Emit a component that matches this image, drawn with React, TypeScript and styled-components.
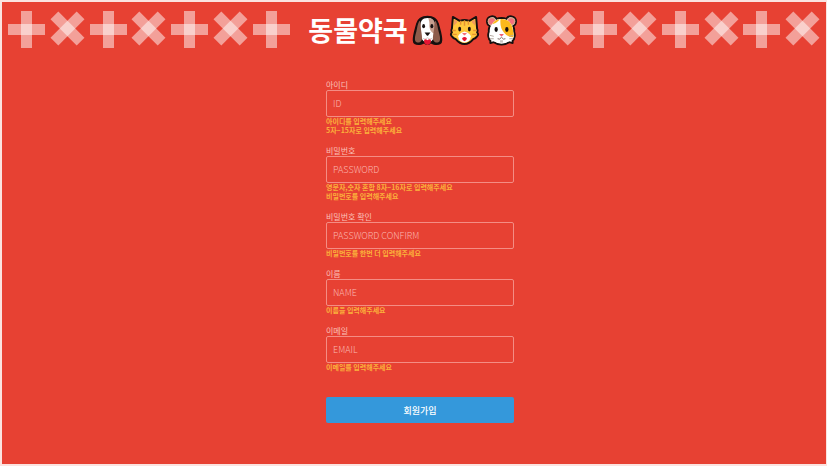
import React from "react";
import styled, { createGlobalStyle } from "styled-components";

const GlobalStyle = createGlobalStyle`
  * { box-sizing: border-box; }
  body {
    margin: 0;
    background: #ffffff;
    font-family: "Noto Sans CJK KR", "Noto Sans", sans-serif;
  }
`;

const Page = styled.div`
  min-height: 100vh;
  border: 2px solid #fbe3e0;
  border-right-width: 1px;
  background: #e74133;
`;

const Header = styled.header`
  display: grid;
  grid-template-columns: 1fr auto 1fr;
  align-items: center;
  padding: 9px 5px 0 6px;
`;

const Strip = styled.div`
  display: flex;
  justify-content: space-between;
`;

const CrossIcon = styled.svg<{ $turned: boolean }>`
  width: 37px;
  height: 37px;
  margin-top: ${(p) => (p.$turned ? "-1px" : "0")};
  overflow: visible;
  transform: rotate(${(p) => (p.$turned ? "45deg" : "0deg")});
  fill: rgba(255, 255, 255, 0.5);
`;

const Title = styled.h1`
  display: flex;
  align-items: center;
  justify-content: center;
  gap: 4px;
  width: 250px;
  margin: 0;
  padding-right: 4px;
  color: #ffffff;
  font-size: 27px;
  font-weight: 700;
  line-height: 37px;
  white-space: nowrap;
`;

const Animals = styled.span`
  display: flex;
  gap: 6px;
  padding-top: 2px;
`;

const AnimalIcon = styled.svg`
  width: 31px;
  height: 31px;
`;

const Content = styled.main`
  padding: 32px 0 40px 12px;
`;

const Form = styled.form`
  display: flex;
  flex-direction: column;
  gap: 11px;
  width: 188px;
  margin: 0 auto;
`;

const Field = styled.div`
  display: flex;
  flex-direction: column;
`;

const Label = styled.label`
  color: #fbc0b8;
  font-size: 8px;
  line-height: 10px;
`;

const Input = styled.input`
  width: 100%;
  height: 27px;
  padding: 0 6px;
  border: 1px solid #f48d84;
  border-radius: 2px;
  outline: none;
  background: transparent;
  color: #ffffff;
  font-family: inherit;
  font-size: 9px;
  font-weight: 300;

  &::placeholder {
    color: #fbb8b1;
    opacity: 1;
  }
`;

const Hint = styled.p`
  margin: 0;
  color: #fbb03b;
  font-size: 7px;
  font-weight: 700;
  line-height: 9px;
`;

const Submit = styled.button`
  height: 26px;
  margin-top: 14px;
  padding: 0;
  border: 0;
  border-radius: 2px;
  background: #3498db;
  color: #ffffff;
  font-family: inherit;
  font-size: 9px;
  font-weight: 500;
  cursor: pointer;
`;

function CrossStrip({ startTurned }: { startTurned: boolean }) {
  return (
    <Strip aria-hidden="true">
      {Array.from({ length: 7 }, (_, i) => (
        <CrossIcon key={i} viewBox="0 0 37 37" $turned={(i % 2 === 1) !== startTurned}>
          <rect x="13" y="0" width="11" height="37" />
          <rect x="0" y="13" width="37" height="11" />
        </CrossIcon>
      ))}
    </Strip>
  );
}

function Dog() {
  return (
    <AnimalIcon viewBox="0 0 32 32" role="img" aria-label="dog">
      <path
        d="M16 1.5C10 1.5 6.500 3.500 5 9C3.500 15 1.500 20 1.500 26C1.500 29.500 4 30.500 8 30.200C10 30 12 28.500 13 28.500C14 30.500 18 30.500 19 28.500C20 28.500 22 30 24 30.200C28 30.500 30.500 29.500 30.500 26C30.500 20 28.500 15 27 9C25.500 3.500 22 1.500 16 1.500Z"
        fill="#17100f" stroke="#17100f" strokeWidth="1.500"
      />
      <path d="M16 3C10.500 3 8.500 6 8.500 12L9.500 23C11 27 13 28 16 28C19 28 21 27 22.500 23L23.500 12C23.500 6 21.500 3 16 3Z" fill="#ffffff" />
      <path d="M17 3C21 3 24 6 24 11L23 19C19 18 17.500 13 18 9C18 6 17 5 17 3Z" fill="#c6a08f" />
      <path d="M8 6C6 8 5.500 13 4.500 17C3.200 21 2.500 25 3.500 27C5 29 8.500 29 10 26C11 23 9.500 18 9 13C8.800 10 9 8 8 6Z" fill="#8d5c4b" />
      <path d="M24 6C26 8 26.500 13 27.500 17C28.800 21 29.500 25 28.500 27C27 29 23.500 29 22 26C21 23 22.500 18 23 13C23.200 10 23 8 24 6Z" fill="#8d5c4b" />
      <ellipse cx="12" cy="11.500" rx="1.500" ry="2.200" fill="#17100f" />
      <ellipse cx="20.500" cy="11.500" rx="1.500" ry="2.200" fill="#17100f" />
      <path d="M13 18H19L16.500 21.500H15.500Z" fill="#17100f" />
      <path d="M11 24Q13.500 26 16 23.500Q18.500 26 21 24" fill="none" stroke="#d6c8c3" />
      <path d="M12.500 25.500Q14.500 24.500 16 26Q17.500 24.500 19.500 25.500V28Q18 31 16 31Q14 31 12.500 28Z" fill="#e81432" />
    </AnimalIcon>
  );
}

function Cat() {
  return (
    <AnimalIcon viewBox="0 0 32 32" role="img" aria-label="cat">
      <path
        d="M4 2L11 6Q16 4.500 21 6L28 2L29 14Q30 16 29 18Q31 20 29 22Q27.500 24 25 25Q21 30 16 30Q11 30 7 25Q4.500 24 3 22Q1 20 3 18Q2 16 3 14Z"
        fill="#ffc83d" stroke="#17100f" strokeWidth="2" strokeLinejoin="round"
      />
      <path d="M5.500 4.500L9 7L5 11ZM26.500 4.500L23 7L27 11Z" fill="#f39a5c" />
      <path d="M12 6V10M16 5.500V11M20 6V10M3.500 16H7M3.500 20H8M28.500 16H25M28.500 20H24" fill="none" stroke="#e69132" strokeWidth="1.500" />
      <ellipse cx="11" cy="14.500" rx="1.500" ry="2.500" fill="#17100f" />
      <ellipse cx="21" cy="14.500" rx="1.500" ry="2.500" fill="#17100f" />
      <path d="M16 17Q10 19 9.500 22Q10 28 16 28.500Q22 28 22.500 22Q22 19 16 17Z" fill="#ffffff" />
      <path d="M13.500 18.500H18.500L16.500 21H15.500Z" fill="#f46d78" />
      <path d="M13.500 24Q16 21.500 18.500 24Q18 27 16 27Q14 27 13.500 24Z" fill="#e81432" />
    </AnimalIcon>
  );
}

function Hamster() {
  return (
    <AnimalIcon viewBox="0 0 32 32" role="img" aria-label="hamster">
      <path
        d="M16 3Q19 3 21 4Q23 0.800 26.500 1.500Q31 2.500 31 6.500Q31 10 28 11.500Q29.500 14 29 17Q30.500 21 29 24Q29 26 27.500 26.500V29L24 28Q20 30.500 16 30.500Q12 30.500 8 28L4.500 29V26.500Q3 26 3 24Q1.500 21 3 17Q2.500 14 4 11.500Q1 10 1 6.500Q1 2.500 5.500 1.500Q9 0.800 11 4Q13 3 16 3Z"
        fill="#ffffff" stroke="#17100f" strokeWidth="2" strokeLinejoin="round"
      />
      <circle cx="6" cy="6.500" r="4.300" fill="#d9a187" />
      <circle cx="26" cy="6.500" r="4.300" fill="#d9a187" />
      <circle cx="6" cy="6.500" r="3" fill="#f4707d" />
      <circle cx="26" cy="6.500" r="3" fill="#f4707d" />
      <path d="M16 4Q9 4 6.500 9Q3.500 13 4 18L3.500 23Q5 26 8 27Q12 29.500 16 29.500Q20 29.500 24 27Q27 26 28.500 23L28 18Q28.500 13 25.500 9Q23 4 16 4Z" fill="#ffffff" />
      <path d="M15 4Q23 4 25.500 9Q28 12 28 17Q29 20 28 23Q22 23 18.500 18Q14 13 15 4Z" fill="#fcb91c" />
      <path d="M14 4Q8.500 5 6.500 9.500Q10 9 13 6Z" fill="#fcb91c" />
      <ellipse cx="10.500" cy="15" rx="1.700" ry="2.500" fill="#17100f" />
      <ellipse cx="21.500" cy="15" rx="1.700" ry="2.500" fill="#17100f" />
      <path d="M13.500 19.500H18.500L16.500 22H15.500Z" fill="#ef5d70" />
      <path d="M12 24.500Q14 26 16 23Q18 26 20 24.500" fill="none" stroke="#77665f" />
      <path d="M4 21L8 22M4 24.500H8M28 21L24 22M28 24.500H24" fill="none" stroke="#b5a79f" />
      <path d="M14.500 26H17.500V28.500H14.500Z" fill="#c9c4c2" />
    </AnimalIcon>
  );
}

const fields = [
  { id: "id", label: "아이디", placeholder: "ID", type: "text", hints: ["아이디를 입력해주세요", "5자~15자로 입력해주세요"] },
  { id: "password", label: "비밀번호", placeholder: "PASSWORD", type: "password", hints: ["영문자,숫자 혼합 8자~16자로 입력해주세요", "비밀번호를 입력해주세요"] },
  { id: "password-confirm", label: "비밀번호 확인", placeholder: "PASSWORD CONFIRM", type: "password", hints: ["비밀번호를 한번 더 입력해주세요"] },
  { id: "name", label: "이름", placeholder: "NAME", type: "text", hints: ["이름을 입력해주세요"] },
  { id: "email", label: "이메일", placeholder: "EMAIL", type: "email", hints: ["이메일를 입력해주세요"] },
];

export default function App() {
  return (
    <Page>
      <GlobalStyle />
      <Header>
        <CrossStrip startTurned={false} />
        <Title>
          동물약국
          <Animals>
            <Dog />
            <Cat />
            <Hamster />
          </Animals>
        </Title>
        <CrossStrip startTurned />
      </Header>
      <Content>
        <Form noValidate onSubmit={(e) => e.preventDefault()}>
          {fields.map((f) => (
            <Field key={f.id}>
              <Label htmlFor={f.id}>{f.label}</Label>
              <Input id={f.id} name={f.id} type={f.type} placeholder={f.placeholder} />
              {f.hints.map((hint) => (
                <Hint key={hint}>{hint}</Hint>
              ))}
            </Field>
          ))}
          <Submit type="submit">회원가입</Submit>
        </Form>
      </Content>
    </Page>
  );
}
